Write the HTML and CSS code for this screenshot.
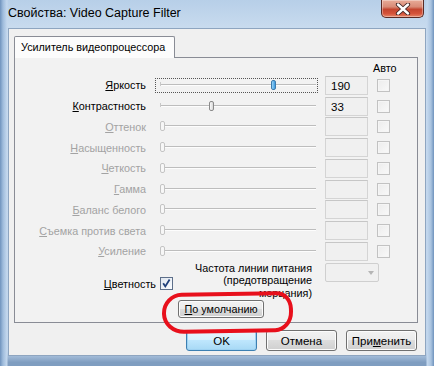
FILE: index.html
```html
<!DOCTYPE html>
<html>
<head>
<meta charset="utf-8">
<link rel="stylesheet" href="styles.css">
</head>
<body>
<div class="window">
  <div class="titlebar">
    <span class="title">Свойства: Video Capture Filter</span>
    <div class="close">
      <svg width="16" height="12" viewBox="0 0 16 12"><path d="M3 1.5 L13 10.5 M13 1.5 L3 10.5" stroke="#3d2323" stroke-width="4.2" stroke-linecap="round"/><path d="M3 1.5 L13 10.5 M13 1.5 L3 10.5" stroke="#ffffff" stroke-width="2.4" stroke-linecap="round"/></svg>
    </div>
  </div>
  <div class="client">
    <div class="tabs"><div class="tab">Усилитель видеопроцессора</div></div>
    <div class="panel">
      <div class="grid">
        <span></span><span></span><span></span><span class="auto-h">Авто</span>

        <span class="lbl"><u>Я</u>ркость</span>
        <div class="slider"><div class="focus"><div class="track"></div><div class="thumb hot" style="left:116px"></div></div></div>
        <div class="edit">190</div><div class="cb"></div>

        <span class="lbl"><u>К</u>онтрастность</span>
        <div class="slider"><div class="nofocus"><div class="track"></div><div class="thumb" style="left:54px"></div></div></div>
        <div class="edit">33</div><div class="cb"></div>

        <span class="lbl dis"><u>О</u>ттенок</span>
        <div class="slider"><div class="nofocus"><div class="track"></div><div class="thumb off" style="left:5px"></div></div></div>
        <div class="edit"></div><div class="cb"></div>

        <span class="lbl dis"><u>Н</u>асыщенность</span>
        <div class="slider"><div class="nofocus"><div class="track"></div><div class="thumb off" style="left:5px"></div></div></div>
        <div class="edit"></div><div class="cb"></div>

        <span class="lbl dis"><u>Ч</u>еткость</span>
        <div class="slider"><div class="nofocus"><div class="track"></div><div class="thumb off" style="left:5px"></div></div></div>
        <div class="edit"></div><div class="cb"></div>

        <span class="lbl dis"><u>Г</u>амма</span>
        <div class="slider"><div class="nofocus"><div class="track"></div><div class="thumb off" style="left:5px"></div></div></div>
        <div class="edit"></div><div class="cb"></div>

        <span class="lbl dis"><u>Б</u>аланс белого</span>
        <div class="slider"><div class="nofocus"><div class="track"></div><div class="thumb off" style="left:5px"></div></div></div>
        <div class="edit"></div><div class="cb"></div>

        <span class="lbl dis"><u>С</u>ъемка против света</span>
        <div class="slider"><div class="nofocus"><div class="track"></div><div class="thumb off" style="left:5px"></div></div></div>
        <div class="edit"></div><div class="cb"></div>

        <span class="lbl dis"><u>У</u>силение</span>
        <div class="slider"><div class="nofocus"><div class="track"></div><div class="thumb off" style="left:5px"></div></div></div>
        <div class="edit"></div><div class="cb"></div>
      </div>
      <div class="bottom">
        <span class="lbl color-lbl"><u>Ц</u>ветность</span>
        <div class="cb checked">
          <svg width="11" height="11" viewBox="0 0 11 11"><path d="M2.2 5.2 L4.3 8.4 L8.6 1.6" fill="none" stroke="#1e3f7a" stroke-width="1.8"/></svg>
        </div>
        <div class="freq">Частота линии питания<br>(предотвращение<br>мерцания)</div>
        <div class="combo"><span class="arrow"></span></div>
      </div>
      <div class="defrow">
        <div class="defwrap">
          <button class="btn def"><u>П</u>о умолчанию</button>
          <div class="ring"></div>
        </div>
      </div>
    </div>
    <div class="buttons">
      <button class="btn big ok">OK</button>
      <button class="btn big">Отмена</button>
      <button class="btn big">При<u>м</u>енить</button>
    </div>
  </div>
</div>
</body>
</html>
```
FILE: styles.css
```css
* { box-sizing: border-box; }
html, body { margin: 0; padding: 0; }
body {
  width: 434px; height: 366px; overflow: hidden;
  font-family: "Liberation Sans", Arial, sans-serif;
  font-size: 10.8px; color: #000;
}
.window {
  width: 434px; height: 366px;
  background:
    linear-gradient(90deg, #6f93bd 0px, #9fbcdc 3px, #c4d8ee 7px, transparent 8px),
    linear-gradient(270deg, #6f93bd 0px, #a9c3df 3px, #c4d8ee 7px, transparent 8px),
    linear-gradient(180deg, #b7cfe8 0%, #d2e2f2 12%, #c6d9ee 40%, #bcd2ea 96%, #7f9dc0 99%);
  padding: 0 8px 11px 8px;
  display: flex; flex-direction: column;
}
.titlebar {
  height: 28px; flex: none;
  display: flex; align-items: flex-start; justify-content: space-between;
}
.title {
  padding-top: 6px; font-size: 12.5px; color: #000;
  white-space: nowrap;
}
.close {
  width: 43px; height: 18px; margin-right: 2px;
  border: 1px solid #5a2a24; border-top: none;
  border-radius: 0 0 5px 5px;
  background: linear-gradient(180deg, #e8ab98 0%, #d98b77 40%, #c4452f 55%, #d5533a 80%, #e58668 100%);
  display: flex; align-items: center; justify-content: center;
  box-shadow: inset 0 0 0 1px rgba(255,255,255,0.35);
}
.client {
  flex: 1;
  background: #f0f0f0;
  border: 1px solid #8ea5c0;
  padding: 7px 8px 4px 5px;
  display: flex; flex-direction: column;
}
.tabs { display: flex; height: 21px; position: relative; z-index: 1; flex: none; }
.tab {
  width: 161px; height: 22px;
  background: #fcfcfc;
  border: 1px solid #898c95; border-bottom: none;
  border-radius: 2px 2px 0 0;
  padding: 4px 0 0 6px;
  white-space: nowrap;
}
.panel {
  width: 404px; height: 266px; flex: none;
  border: 1px solid #898c95;
  background: #f2f2f2;
  display: flex; flex-direction: column;
}
.grid {
  display: grid;
  grid-template-columns: 131px 172px 50px 22px;
  grid-template-rows: 17px repeat(9, 20.75px);
}
.grid > .slider { margin-left: 9px; }
.grid > .edit { margin-left: 7px; }
.grid > .cb { margin-left: 9px; }
.auto-h { padding-left: 5px; padding-top: 4px; white-space: nowrap; }
.lbl {
  text-align: right; align-self: center; white-space: nowrap;
  line-height: 14px;
}
.lbl.dis { color: #a3a3a3; }
u { text-decoration-thickness: 1px; text-underline-offset: 1px; }
.slider { align-self: center; height: 15px; }
.focus, .nofocus { position: relative; height: 15px; width: 163px; }
.focus { outline: 1px dotted #555; outline-offset: -1px; }
.track {
  position: absolute; left: 5px; right: 2px; top: 6px; height: 2px;
  border-top: 1px solid #bdbdbd; border-bottom: 1px solid #fdfdfd;
}
.track::before {
  content: ""; position: absolute; left: 0; top: -3px; width: 1px; height: 4px; background: #c8c8c8;
}
.thumb {
  position: absolute; top: 2px; width: 5px; height: 10px;
  border: 1px solid #8a8a8a; border-radius: 2px;
  background: linear-gradient(90deg, #fafafa, #d8d8d8);
}
.thumb.hot { border-color: #3d7bad; background: linear-gradient(90deg, #9ad4f7, #3d9ae0); }
.thumb.off { border-color: #c4c4c4; background: #f7f7f7; }
.edit {
  align-self: center; height: 19px; width: 43px;
  border: 1px solid #d4d4d4; border-top-color: #c6c6c6;
  background: #f0f0f0;
  padding: 2px 0 0 5px; font-size: 11.5px; line-height: 14px;
}
.cb {
  align-self: center; width: 13px; height: 13px;
  border: 1px solid #c2c2c2;
  background: linear-gradient(135deg, #ececec, #f9f9f9);
  box-shadow: inset 0 0 0 1px #f5f5f5;
}
.bottom {
  display: flex; align-items: flex-start; height: 38px; flex: none;
  padding-top: 1px;
}
.color-lbl { width: 141px; margin-top: 6px; }
.bottom .cb.checked {
  margin-left: 4px; margin-top: 4px;
  border-color: #5d6f8a;
  background: linear-gradient(135deg, #dfe6ef, #fafcff);
  display: flex; align-items: center; justify-content: center;
  box-shadow: none;
}
.freq {
  width: 126px; margin-left: 13px;
  text-align: right; line-height: 12.5px; white-space: nowrap;
  margin-top: -1px;
}
.combo {
  width: 54px; height: 19px; margin-left: 13px;
  border: 1px solid #cfcfcf; background: #f0f0f0; border-radius: 2px;
  position: relative;
}
.arrow {
  position: absolute; right: 4px; top: 7px;
  border-left: 3.5px solid transparent; border-right: 3.5px solid transparent;
  border-top: 4px solid #b5b5b5;
}
.defrow { padding-left: 163px; }
.defwrap { position: relative; width: 86px; height: 18px; }
.btn {
  font-family: "Liberation Sans", Arial, sans-serif;
  font-size: 10.8px; color: #000;
  border: 1px solid #707070; border-radius: 3px;
  background: linear-gradient(180deg, #f2f2f2 0%, #ebebeb 49%, #dddddd 50%, #cfcfcf 100%);
  box-shadow: inset 0 0 0 1px #fcfcfc;
  padding: 0; margin: 0; white-space: nowrap;
}
.def { width: 86px; height: 18px; line-height: 14px; }
.ring {
  position: absolute; left: -16px; top: -8px; width: 131px; height: 41px;
  border: 4px solid #e8101c;
  border-radius: 20px 16px 18px 22px / 20px 18px 20px 20px;
  transform: rotate(-1deg);
}
.buttons {
  display: flex; justify-content: flex-end; gap: 9px;
  margin-top: 7px; flex: none;
}
.big { width: 71px; height: 21px; font-size: 11.5px; }
.ok {
  border-color: #3c7fb1;
  background: linear-gradient(180deg, #eaf6fd 0%, #d9f0fc 49%, #bee6fd 50%, #a7d9f5 100%);
  box-shadow: inset 0 0 0 1px #9fd2f2;
}
```
